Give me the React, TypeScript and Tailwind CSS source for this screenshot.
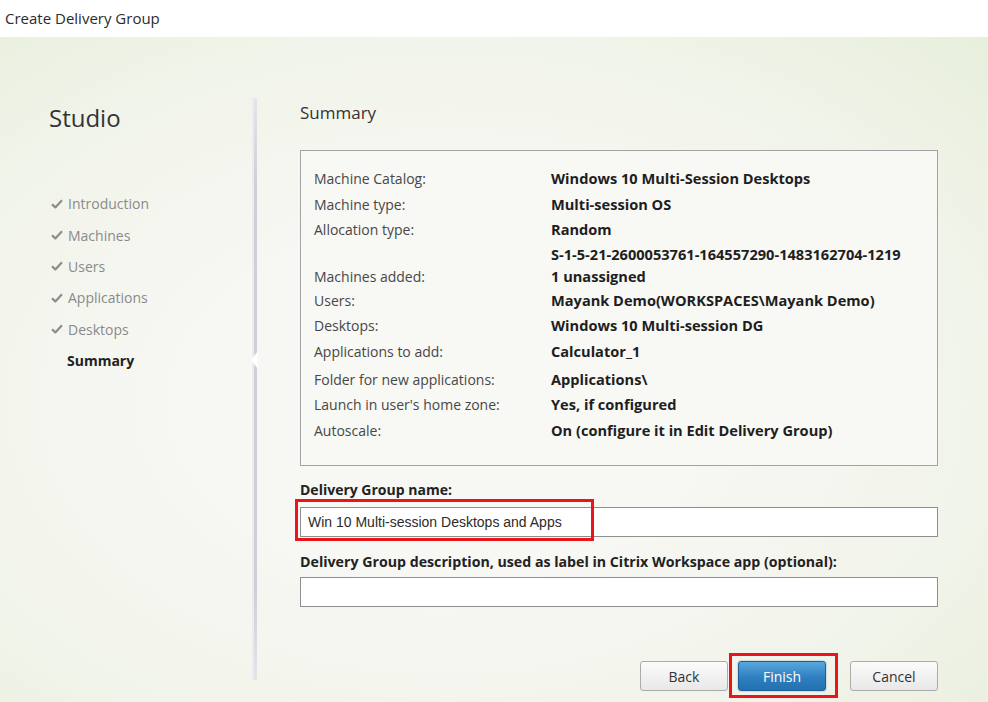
import React from 'react';

const font = { fontFamily: '"Open Sans", "Noto Sans", sans-serif' };

const steps = ['Introduction', 'Machines', 'Users', 'Applications', 'Desktops'];

type Row = { label: string; value: string[]; h: string };

const rows: Row[] = [
  { label: 'Machine Catalog:', value: ['Windows 10 Multi-Session Desktops'], h: 'h-[26px]' },
  { label: 'Machine type:', value: ['Multi-session OS'], h: 'h-[25px]' },
  { label: 'Allocation type:', value: ['Random'], h: 'h-[25px]' },
  {
    label: 'Machines added:',
    value: ['S-1-5-21-2600053761-164557290-1483162704-1219', '1 unassigned'],
    h: 'h-[46px]',
  },
  { label: 'Users:', value: ['Mayank Demo(WORKSPACES\\Mayank Demo)'], h: 'h-[25px]' },
  { label: 'Desktops:', value: ['Windows 10 Multi-session DG'], h: 'h-[26px]' },
  { label: 'Applications to add:', value: ['Calculator_1'], h: 'h-[28px]' },
  { label: 'Folder for new applications:', value: ['Applications\\'], h: 'h-[25px]' },
  { label: "Launch in user's home zone:", value: ['Yes, if configured'], h: 'h-[26px]' },
  { label: 'Autoscale:', value: ['On (configure it in Edit Delivery Group)'], h: 'h-[26px]' },
];

const CheckMark = () => (
  <svg width="12" height="10" viewBox="0 0 12 10" className="shrink-0">
    <path d="M1 5.2 L4.3 8.4 L11 1.2" fill="none" stroke="#8c8c8c" strokeWidth="2.2" strokeLinejoin="round" />
  </svg>
);

export default function App() {
  return (
    <div className="w-[988px] h-[702px] overflow-hidden bg-white flex flex-col text-[#333]" style={font}>
      <div className="h-[37px] shrink-0 bg-white flex items-center pl-[5px] pb-[1px] text-[15px] text-[#2b2b2b]">
        Create Delivery Group
      </div>

      <div className="flex-1 flex bg-[radial-gradient(ellipse_at_45%_55%,#f7f7f3_35%,#f1f4ea_70%,#e8efdc_100%)]">
        {/* sidebar */}
        <div className="w-[252px] shrink-0 pl-[49px] pt-[65px]">
          <div className="text-[24px] leading-[32px] text-[#333]">Studio</div>
          <div className="mt-[54px] pl-[2px] flex flex-col">
            {steps.map((s) => (
              <div key={s} className="h-[31.4px] flex items-center gap-[5px] text-[14px] text-[#8a8a8a]">
                <CheckMark />
                <span>{s}</span>
              </div>
            ))}
            <div className="h-[31.4px] flex items-center pl-[16px] text-[14px] font-bold text-[#222]">Summary</div>
          </div>
        </div>

        {/* divider */}
        <div className="relative w-[5px] shrink-0 mt-[61px] mb-[22px] flex">
          <div className="w-[2px] bg-[#ececee]" />
          <div className="w-[3px] bg-[linear-gradient(to_bottom,#e4e4ea,#cfcfd6_15%,#cfcfd6_85%,#e4e4ea)]" />
          <div className="absolute left-[-1px] top-[253px] w-0 h-0 border-y-[9px] border-y-transparent border-r-[7px] border-r-white" />
        </div>

        {/* content */}
        <div className="flex-1 pl-[43px] pr-[50px] pt-[64px] flex flex-col">
          <div className="text-[17px] leading-[24px] text-[#333]">Summary</div>

          <div className="mt-[25px] h-[316px] border border-[#a3a3a3] bg-[#f8f8f5] pt-[16px] pl-[13px]">
            {rows.map((r) => (
              <div key={r.label} className={`${r.h} flex text-[14px] leading-[22px]`}>
                <div className={`w-[237px] shrink-0 text-[#474747] ${r.value.length > 1 ? 'pt-[23px]' : 'pt-[1px]'}`}>
                  {r.label}
                </div>
                <div className="font-bold text-[14.6px] text-[#1e1e1e]">
                  {r.value.map((v) => (
                    <div key={v}>{v}</div>
                  ))}
                </div>
              </div>
            ))}
          </div>

          <div className="mt-[13px] text-[14px] leading-[22px] font-bold text-[#222]">Delivery Group name:</div>
          <div className="relative mt-[6px]">
            <div
              className="h-[30px] border border-[#8f8f8f] bg-white flex items-center pl-[7px] text-[14px] text-[#2b2b2b]"
              style={{ fontFamily: '"Liberation Sans", Arial, sans-serif' }}
            >
              Win 10 Multi-session Desktops and Apps
            </div>
            <div className="absolute left-[-5px] top-[-8px] w-[299px] h-[42px] border-[3px] border-[#e8151b]" />
          </div>

          <div className="mt-[14px] text-[14.2px] leading-[22px] font-bold text-[#222]">
            Delivery Group description, used as label in Citrix Workspace app (optional):
          </div>
          <div className="mt-[4px] h-[30px] border border-[#8f8f8f] bg-white" />

          <div className="mt-[54px] flex justify-end items-center">
            <button className="w-[88px] h-[30px] rounded-[3px] border border-[#ababab] bg-[linear-gradient(to_bottom,#fbfbfb,#e8e8e8)] text-[14px] text-[#333]">
              Back
            </button>
            <div className="relative ml-[10px]">
              <button className="w-[88px] h-[30px] rounded-[3px] border border-[#1d5f9c] bg-[linear-gradient(to_bottom,#5aa7dd,#2f7fc0_55%,#2470b0)] text-[14px] text-white shadow-[0_0_2px_rgba(30,90,150,0.5)]">
                Finish
              </button>
              <div className="absolute left-[-9px] top-[-8px] w-[109px] h-[45px] border-[3px] border-[#e8151b]" />
            </div>
            <button className="ml-[24px] w-[88px] h-[30px] rounded-[3px] border border-[#ababab] bg-[linear-gradient(to_bottom,#fbfbfb,#e8e8e8)] text-[14px] text-[#333]">
              Cancel
            </button>
          </div>
        </div>
      </div>
    </div>
  );
}
